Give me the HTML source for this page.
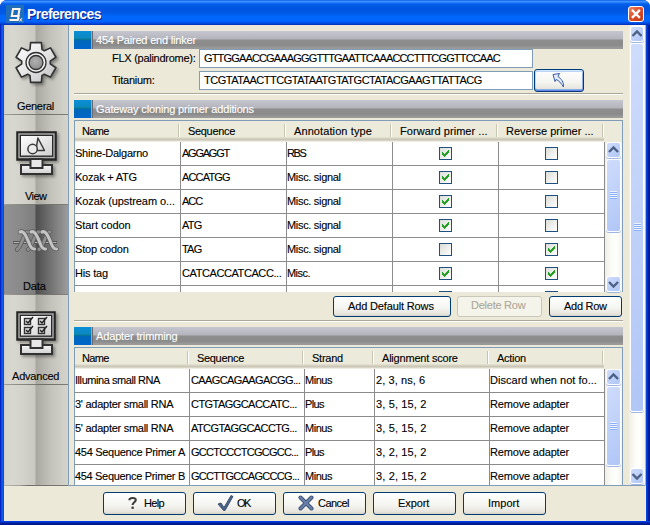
<!DOCTYPE html>
<html><head><meta charset="utf-8"><style>
*{box-sizing:border-box;margin:0;padding:0}
html,body{width:650px;height:525px;overflow:hidden;background:#fff}
body{position:relative;font-family:"Liberation Sans",sans-serif;font-size:11px;color:#000}
.a{position:absolute}
.t{position:absolute;white-space:nowrap;line-height:13px;font-size:11px;-webkit-text-stroke-width:0.12px}
.ttl{position:absolute;white-space:nowrap;line-height:16px;font-size:14px;font-weight:bold;color:#fff;text-shadow:1px 1px 0 #0a1e8a}
#frame{left:0;top:0;width:650px;height:525px;border-radius:7px 7px 0 0;overflow:hidden;
 background:linear-gradient(to right,#0019b0 0,#0831d9 1px,#1660f0 2px,#0a50e0 3px,#0a50e0 646px,#0038d8 647px,#0028b8 648px,#001890 649px)}
#title{left:0;top:0;width:650px;height:25px;border-radius:7px 7px 0 0;
 background:linear-gradient(to bottom,#0048dc 0,#3d95ff 1px,#3a90ff 2px,#1270f8 3px,#0560ec 4px,#0058e2 6px,#0054e0 10px,#005ce8 14px,#0066fc 16px,#0066ff 21px,#0050e8 23px,#003ccc 24px,#0030b8 25px)}
#bottomb{left:0;top:521px;width:650px;height:4px;background:linear-gradient(#0048f0,#0032d0 1px,#0022a8 2px,#001888 3px)}
#content{left:4px;top:25px;width:642px;height:496px;background:#ece9d8}
.cb{position:absolute;width:13px;height:13px;border:1px solid #1c5180;background:linear-gradient(135deg,#dcdcd7,#fff)}
.btn{position:absolute;border:1px solid #003c74;border-radius:3px;background:linear-gradient(#fff,#f4f4f0 60%,#e6e4dc 90%,#d6d0c5)}
.btn.dis{border-color:#c9c7ba;background:#f5f4ea}
.sbb{position:absolute;border:1px solid #fff;border-radius:3px;background:linear-gradient(135deg,#cedcfc,#bccff8 60%,#b0c6f6);box-shadow:0 1px 0 #9fb6e2}
.btn.foc{box-shadow:inset 0 1px 0 #cee7ff,inset 0 2px 0 #bcd4f6,inset 0 -1px 0 #6982ee,inset 0 -2px 0 #89ade4,inset 1px 0 0 #bcd4f6,inset -1px 0 0 #89ade4}

</style></head><body>
<div class="a" id="frame"></div>
<div class="a" id="title"></div>
<div class="a" id="bottomb"></div>
<div class="a" id="content"></div>
<svg class="a" style="left:6px;top:5px" width="18" height="18" viewBox="0 0 18 18">
<rect x="0" y="0" width="18" height="18" fill="#1864b4"/><rect x="0" y="0" width="18" height="18" fill="#2a80c8" opacity="0.35"/>
<path d="M7 4 H13.5 L12.3 11 H5.7 Z" stroke="#fff4ec" stroke-width="2" fill="none" stroke-linejoin="miter"/>
<path d="M12.8 10 L11.8 15 H3.5" stroke="#fff4ec" stroke-width="2" fill="none"/>
<path d="M13.5 13.5 L16 16.5 M16 13 L13.5 16.5" stroke="#fff4ec" stroke-width="1" fill="none"/></svg>
<div class="ttl" style="left:27px;top:6px;letter-spacing:-0.558px;">Preferences</div>
<svg class="a" style="left:628px;top:6px" width="16" height="16" viewBox="0 0 16 16">
<defs><linearGradient id="cg" x1="0" y1="0" x2="1" y2="1"><stop offset="0" stop-color="#f08a6a"/><stop offset="0.45" stop-color="#e0502a"/><stop offset="1" stop-color="#c03810"/></linearGradient></defs>
<rect x="0.5" y="0.5" width="15" height="15" rx="2.5" fill="url(#cg)" stroke="#fff" stroke-width="1"/>
<path d="M4.8 4.8 L11 11 M11 4.8 L4.8 11" stroke="#fff" stroke-width="2.4" stroke-linecap="square"/></svg>
<div class="a" style="left:4px;top:25px;width:64px;height:460px;background:linear-gradient(to right,#c4c4bc 0,#d4d4cc 1px,#d8d8d0 8px,#d2d2ca 20px,#c9c9c1 31px,#a8a8a0 32px,#c2c2ba 46px,#d4d4cc 63px);"></div>
<div class="a" style="left:4px;top:485px;width:64px;height:1px;background:linear-gradient(to right,#b8b8b0,#a0a098 16px,#707068 24px,#787870);"></div>
<div class="a" style="left:4px;top:114px;width:64px;height:1px;background:linear-gradient(to right,#a0a098,#8a8a82 16px,#6e6e68 40px,#808078);"></div>
<div class="t" style="left:17px;top:100px;letter-spacing:-0.308px;">General</div>
<div class="a" style="left:4px;top:204px;width:64px;height:1px;background:linear-gradient(to right,#a0a098,#8a8a82 16px,#6e6e68 40px,#808078);"></div>
<div class="t" style="left:25px;top:190px;letter-spacing:-0.560px;">View</div>
<div class="a" style="left:4px;top:205px;width:64px;height:89px;background:linear-gradient(to right,#888 0,#919191 1px,#8a8a8a 16px,#7e7e7e 31px,#4e4e4e 32px,#6e6e6e 45px,#9a9a9a 63px);"></div>
<div class="a" style="left:4px;top:294px;width:64px;height:1px;background:linear-gradient(to right,#a0a098,#8a8a82 16px,#6e6e68 40px,#808078);"></div>
<div class="t" style="left:23px;top:280px;letter-spacing:-0.112px;">Data</div>
<div class="a" style="left:4px;top:384px;width:64px;height:1px;background:linear-gradient(to right,#a0a098,#8a8a82 16px,#6e6e68 40px,#808078);"></div>
<div class="t" style="left:12px;top:370px;letter-spacing:-0.209px;">Advanced</div>
<svg class="a" style="left:4px;top:25px" width="64" height="360" viewBox="4 25 64 360">
<defs>
<linearGradient id="gg" x1="0" y1="0" x2="1" y2="1"><stop offset="0" stop-color="#fdfdfd"/><stop offset="0.5" stop-color="#e6e6e6"/><stop offset="1" stop-color="#bdbdbd"/></linearGradient>
<radialGradient id="gc" cx="0.45" cy="0.4" r="0.7"><stop offset="0" stop-color="#b0b0b0"/><stop offset="1" stop-color="#8a8a8a"/></radialGradient>
<linearGradient id="scr" x1="0" y1="0" x2="1" y2="1"><stop offset="0" stop-color="#ffffff"/><stop offset="1" stop-color="#d0d0d0"/></linearGradient>
<linearGradient id="bas" x1="0" y1="0" x2="0" y2="1"><stop offset="0" stop-color="#f8f8f8"/><stop offset="1" stop-color="#cfcfcf"/></linearGradient>
<filter id="sh" x="-20%" y="-20%" width="150%" height="150%"><feGaussianBlur in="SourceAlpha" stdDeviation="1.5"/><feOffset dx="2" dy="2"/><feComponentTransfer><feFuncA type="linear" slope="0.35"/></feComponentTransfer><feMerge><feMergeNode/><feMergeNode in="SourceGraphic"/></feMerge></filter>
<linearGradient id="dna" x1="0" y1="0" x2="0" y2="1"><stop offset="0" stop-color="#d8d8d8"/><stop offset="1" stop-color="#a8a8a8"/></linearGradient>
</defs>
<g filter="url(#sh)">
<path d="M30.00 49.52 L30.60 42.62 L41.40 42.62 L42.00 49.52 A14.3 14.3 0 0 1 44.24 50.81 L50.52 47.88 L55.92 57.24 L50.24 61.21 A14.3 14.3 0 0 1 50.24 63.79 L55.92 67.76 L50.52 77.12 L44.24 74.19 A14.3 14.3 0 0 1 42.00 75.48 L41.40 82.38 L30.60 82.38 L30.00 75.48 A14.3 14.3 0 0 1 27.76 74.19 L21.48 77.12 L16.08 67.76 L21.76 63.79 A14.3 14.3 0 0 1 21.76 61.21 L16.08 57.24 L21.48 47.88 L27.76 50.81 A14.3 14.3 0 0 1 30.00 49.52 Z" fill="url(#gg)" stroke="#303030" stroke-width="1.6" stroke-linejoin="round"/>
<circle cx="36" cy="62.5" r="10" fill="#f4f4f4" stroke="#303030" stroke-width="1.3"/>
<circle cx="36" cy="62.5" r="7" fill="url(#gc)" stroke="#303030" stroke-width="1.3"/>
</g>
<g filter="url(#sh)">
<rect x="17" y="132" width="39" height="28" fill="#3a3a3a" stroke="#222" stroke-width="1.5"/>
<rect x="19" y="134" width="35" height="23.5" fill="none" stroke="#b0b0b0" stroke-width="1.3"/>
<rect x="20.5" y="135.5" width="32" height="20.5" fill="url(#scr)" stroke="#2a2a2a" stroke-width="1"/>
<rect x="21" y="165" width="31" height="9" fill="url(#bas)" stroke="#333" stroke-width="2"/>
<rect x="30.5" y="159" width="12" height="9" fill="#e8e8e8" stroke="#333" stroke-width="2"/>
<path d="M37.9 138 L35.9 150.5 L44.5 150.5 Z" fill="#e4e4e4" stroke="#3a3a3a" stroke-width="1.5" stroke-linejoin="round"/>
<circle cx="32.6" cy="149" r="4.7" fill="#ebebeb" stroke="#3a3a3a" stroke-width="1.5"/>
</g>
<g>
<path d="M13 242.5 H57" stroke="#555" stroke-width="2.8"/><path d="M13.5 242.5 H56.5" stroke="#b4b4b4" stroke-width="1.1"/><path d="M17 249.5 C19 249 21 244 23 239 C25 234 26 231.5 28 232" fill="none" stroke="#5a5a5a" stroke-width="4.4" stroke-linecap="round"/><path d="M17 249.5 C19 249 21 244 23 239 C25 234 26 231.5 28 232" fill="none" stroke="#8e8e8e" stroke-width="2.9" stroke-linecap="round"/><path d="M28 249.5 C30 249 32 244 34 239 C36 234 37 231.5 39 232" fill="none" stroke="#5a5a5a" stroke-width="4.4" stroke-linecap="round"/><path d="M28 249.5 C30 249 32 244 34 239 C36 234 37 231.5 39 232" fill="none" stroke="#8e8e8e" stroke-width="2.9" stroke-linecap="round"/><path d="M39 249.5 C41 249 43 244 45 239 C47 234 48 231.5 50 232" fill="none" stroke="#5a5a5a" stroke-width="4.4" stroke-linecap="round"/><path d="M39 249.5 C41 249 43 244 45 239 C47 234 48 231.5 50 232" fill="none" stroke="#8e8e8e" stroke-width="2.9" stroke-linecap="round"/><path d="M20 232 C24 230 27 238 29 243 C30.5 247 32 249.5 34.5 249" fill="none" stroke="#585858" stroke-width="4.6" stroke-linecap="round"/><path d="M20 232 C24 230 27 238 29 243 C30.5 247 32 249.5 34.5 249" fill="none" stroke="#c4c4c4" stroke-width="3.1" stroke-linecap="round"/><path d="M31 232 C35 230 38 238 40 243 C41.5 247 43 249.5 45.5 249" fill="none" stroke="#585858" stroke-width="4.6" stroke-linecap="round"/><path d="M31 232 C35 230 38 238 40 243 C41.5 247 43 249.5 45.5 249" fill="none" stroke="#c4c4c4" stroke-width="3.1" stroke-linecap="round"/><path d="M42 232 C46 230 49 238 51 243 C52.5 247 54 249.5 56.5 249" fill="none" stroke="#585858" stroke-width="4.6" stroke-linecap="round"/><path d="M42 232 C46 230 49 238 51 243 C52.5 247 54 249.5 56.5 249" fill="none" stroke="#c4c4c4" stroke-width="3.1" stroke-linecap="round"/>
</g>
<g filter="url(#sh)">
<rect x="17" y="312" width="38" height="28" fill="#3a3a3a" stroke="#222" stroke-width="1.5"/>
<rect x="19" y="314" width="34" height="23.5" fill="none" stroke="#b0b0b0" stroke-width="1.3"/>
<rect x="20.5" y="315.5" width="31" height="20.5" fill="url(#scr)" stroke="#2a2a2a" stroke-width="1"/>
<rect x="21" y="345" width="31" height="9" fill="url(#bas)" stroke="#333" stroke-width="2"/>
<rect x="30.5" y="339" width="12" height="9" fill="#e8e8e8" stroke="#333" stroke-width="2"/>
<rect x="24.5" y="318.5" width="6" height="6" fill="#ddd" stroke="#333" stroke-width="1.4"/><path d="M26 321 L28 323 L33 317" fill="none" stroke="#222" stroke-width="1.5"/><rect x="38.5" y="318.5" width="6" height="6" fill="#ddd" stroke="#333" stroke-width="1.4"/><path d="M40 321 L42 323 L47 317" fill="none" stroke="#222" stroke-width="1.5"/><rect x="24.5" y="327.5" width="6" height="6" fill="#ddd" stroke="#333" stroke-width="1.4"/><path d="M26 330 L28 332 L33 326" fill="none" stroke="#222" stroke-width="1.5"/><rect x="38.5" y="327.5" width="6" height="6" fill="#ddd" stroke="#333" stroke-width="1.4"/><path d="M40 330 L42 332 L47 326" fill="none" stroke="#222" stroke-width="1.5"/>
</g>
</svg>
<div class="a" style="left:68px;top:25px;width:1px;height:461px;background:#7f9db9;"></div>
<div class="a" style="left:68px;top:485px;width:578px;height:1px;background:#7f9db9;"></div>
<div class="a" style="left:645px;top:25px;width:1px;height:461px;background:#a8b8cc;"></div>
<div class="a" style="left:74px;top:31px;width:17px;height:18px;background:linear-gradient(to bottom,#0b8fd8 0,#0a88c0 7px,#0b7f88 8px,#0068b8 9px,#0066c8 17px);"></div>
<div class="a" style="left:91px;top:31px;width:1px;height:18px;background:#60b8e8;"></div>
<div class="a" style="left:92px;top:31px;width:1px;height:18px;background:#6a6a70;"></div>
<div class="a" style="left:93px;top:31px;width:530px;height:18px;background:linear-gradient(to bottom,#c6c6d0 0,#b4b4bc 8px,#8e8e8e 9px,#8a8a8a 14px,#9a9a9a 17px);"></div>
<div class="t" style="left:96px;top:34px;letter-spacing:-0.192px;color:#ffffff;">454 Paired end linker</div>
<div class="t" style="left:112px;top:52px;letter-spacing:-0.268px;">FLX (palindrome):</div>
<div class="t" style="left:112px;top:74px;letter-spacing:-0.260px;">Titanium:</div>
<div class="a" style="left:199px;top:49px;width:334px;height:19px;background:#fff;border:1px solid #7f9db9;"></div>
<div class="a" style="left:199px;top:71px;width:334px;height:19px;background:#fff;border:1px solid #7f9db9;"></div>
<div class="t" style="left:204px;top:52px;letter-spacing:-0.839px;">GTTGGAACCGAAAGGGTTTGAATTCAAACCCTTTCGGTTCCAAC</div>
<div class="t" style="left:204px;top:74px;letter-spacing:-0.484px;">TCGTATAACTTCGTATAATGTATGCTATACGAAGTTATTACG</div>
<div class="btn foc" style="left:534px;top:69px;width:50px;height:23px"></div>
<svg class="a" style="left:548px;top:70px" width="20" height="20"><path d="M5 4.5 L11.5 3.5 L10 6.5 C13 8.5 16 12 15.5 17 C13 13 11 10.5 8 9.5 L7 11.5 Z" fill="#e4ecfa" stroke="#3a5ca8" stroke-width="1" stroke-linejoin="round"/></svg>
<div class="a" style="left:74px;top:93px;width:549px;height:1px;background:#aca899;"></div>
<div class="a" style="left:74px;top:94px;width:549px;height:1px;background:#fff;"></div>
<div class="a" style="left:74px;top:100px;width:17px;height:18px;background:linear-gradient(to bottom,#0b8fd8 0,#0a88c0 7px,#0b7f88 8px,#0068b8 9px,#0066c8 17px);"></div>
<div class="a" style="left:91px;top:100px;width:1px;height:18px;background:#60b8e8;"></div>
<div class="a" style="left:92px;top:100px;width:1px;height:18px;background:#6a6a70;"></div>
<div class="a" style="left:93px;top:100px;width:530px;height:18px;background:linear-gradient(to bottom,#c6c6d0 0,#b4b4bc 8px,#8e8e8e 9px,#8a8a8a 14px,#9a9a9a 17px);"></div>
<div class="t" style="left:96px;top:103px;letter-spacing:-0.147px;color:#ffffff;">Gateway cloning primer additions</div>
<div class="a" style="left:0;top:0;width:650px;height:292px;overflow:hidden">
<div class="a" style="left:74px;top:120px;width:549px;height:173px;background:#fff;border:1px solid #7f9db9;border-bottom-width:1px;"></div>
<div class="a" style="left:75px;top:121px;width:547px;height:21px;background:#ebeadb;"></div>
<div class="a" style="left:75px;top:137px;width:529px;height:1px;background:#e2decd;"></div>
<div class="a" style="left:75px;top:138px;width:529px;height:1px;background:#d6d2c2;"></div>
<div class="a" style="left:75px;top:139px;width:529px;height:1px;background:#cbc7b8;"></div>
<div class="a" style="left:75px;top:140px;width:529px;height:1px;background:#d8d4c6;"></div>
<div class="a" style="left:75px;top:141px;width:529px;height:1px;background:#f0eee4;"></div>
<div class="a" style="left:178px;top:124px;width:1px;height:13px;background:#c7c5b2;"></div>
<div class="a" style="left:179px;top:124px;width:1px;height:13px;background:#fff;"></div>
<div class="a" style="left:284px;top:124px;width:1px;height:13px;background:#c7c5b2;"></div>
<div class="a" style="left:285px;top:124px;width:1px;height:13px;background:#fff;"></div>
<div class="a" style="left:390px;top:124px;width:1px;height:13px;background:#c7c5b2;"></div>
<div class="a" style="left:391px;top:124px;width:1px;height:13px;background:#fff;"></div>
<div class="a" style="left:496px;top:124px;width:1px;height:13px;background:#c7c5b2;"></div>
<div class="a" style="left:497px;top:124px;width:1px;height:13px;background:#fff;"></div>
<div class="a" style="left:602px;top:124px;width:1px;height:13px;background:#c7c5b2;"></div>
<div class="a" style="left:603px;top:124px;width:1px;height:13px;background:#fff;"></div>
<div class="t" style="left:82px;top:125px;letter-spacing:-0.686px;">Name</div>
<div class="t" style="left:188px;top:125px;letter-spacing:-0.324px;">Sequence</div>
<div class="t" style="left:294px;top:125px;letter-spacing:0.098px;">Annotation type</div>
<div class="t" style="left:400px;top:125px;letter-spacing:0.049px;">Forward primer ...</div>
<div class="t" style="left:506px;top:125px;letter-spacing:0.015px;">Reverse primer ...</div>
<div class="t" style="left:75px;top:147px;letter-spacing:-0.248px;">Shine-Dalgarno</div>
<div class="t" style="left:182px;top:147px;letter-spacing:-1.237px;">AGGAGGT</div>
<div class="t" style="left:287px;top:147px;letter-spacing:-1.342px;">RBS</div>
<div class="cb" style="left:439px;top:147px"></div>
<svg class="a" style="left:439px;top:147px" width="13" height="13" shape-rendering="crispEdges"><path fill="#21a121" d="M9 3h1v1h-1zM8 4h2v1h-2zM3 5h1v1h-1zM7 5h3v1h-3zM3 6h2v1h-2zM6 6h3v1h-3zM3 7h5v1h-5zM4 8h3v1h-3zM5 9h1v1h-1z"/></svg>
<div class="cb" style="left:545px;top:147px"></div>
<div class="t" style="left:75px;top:171px;letter-spacing:-0.213px;">Kozak + ATG</div>
<div class="t" style="left:182px;top:171px;letter-spacing:-0.842px;">ACCATGG</div>
<div class="t" style="left:287px;top:171px;letter-spacing:-0.314px;">Misc. signal</div>
<div class="cb" style="left:439px;top:171px"></div>
<svg class="a" style="left:439px;top:171px" width="13" height="13" shape-rendering="crispEdges"><path fill="#21a121" d="M9 3h1v1h-1zM8 4h2v1h-2zM3 5h1v1h-1zM7 5h3v1h-3zM3 6h2v1h-2zM6 6h3v1h-3zM3 7h5v1h-5zM4 8h3v1h-3zM5 9h1v1h-1z"/></svg>
<div class="cb" style="left:545px;top:171px"></div>
<div class="t" style="left:75px;top:195px;letter-spacing:-0.078px;">Kozak (upstream o...</div>
<div class="t" style="left:182px;top:195px;letter-spacing:-1.073px;">ACC</div>
<div class="t" style="left:287px;top:195px;letter-spacing:-0.314px;">Misc. signal</div>
<div class="cb" style="left:439px;top:195px"></div>
<svg class="a" style="left:439px;top:195px" width="13" height="13" shape-rendering="crispEdges"><path fill="#21a121" d="M9 3h1v1h-1zM8 4h2v1h-2zM3 5h1v1h-1zM7 5h3v1h-3zM3 6h2v1h-2zM6 6h3v1h-3zM3 7h5v1h-5zM4 8h3v1h-3zM5 9h1v1h-1z"/></svg>
<div class="cb" style="left:545px;top:195px"></div>
<div class="t" style="left:75px;top:219px;letter-spacing:-0.056px;">Start codon</div>
<div class="t" style="left:182px;top:219px;letter-spacing:-0.804px;">ATG</div>
<div class="t" style="left:287px;top:219px;letter-spacing:-0.314px;">Misc. signal</div>
<div class="cb" style="left:439px;top:219px"></div>
<svg class="a" style="left:439px;top:219px" width="13" height="13" shape-rendering="crispEdges"><path fill="#21a121" d="M9 3h1v1h-1zM8 4h2v1h-2zM3 5h1v1h-1zM7 5h3v1h-3zM3 6h2v1h-2zM6 6h3v1h-3zM3 7h5v1h-5zM4 8h3v1h-3zM5 9h1v1h-1z"/></svg>
<div class="cb" style="left:545px;top:219px"></div>
<div class="t" style="left:75px;top:243px;letter-spacing:-0.202px;">Stop codon</div>
<div class="t" style="left:182px;top:243px;letter-spacing:-0.804px;">TAG</div>
<div class="t" style="left:287px;top:243px;letter-spacing:-0.314px;">Misc. signal</div>
<div class="cb" style="left:439px;top:243px"></div>
<div class="cb" style="left:545px;top:243px"></div>
<svg class="a" style="left:545px;top:243px" width="13" height="13" shape-rendering="crispEdges"><path fill="#21a121" d="M9 3h1v1h-1zM8 4h2v1h-2zM3 5h1v1h-1zM7 5h3v1h-3zM3 6h2v1h-2zM6 6h3v1h-3zM3 7h5v1h-5zM4 8h3v1h-3zM5 9h1v1h-1z"/></svg>
<div class="t" style="left:75px;top:267px;letter-spacing:-0.179px;">His tag</div>
<div class="t" style="left:182px;top:267px;letter-spacing:-0.409px;">CATCACCATCACC...</div>
<div class="t" style="left:287px;top:267px;letter-spacing:-0.551px;">Misc.</div>
<div class="cb" style="left:439px;top:267px"></div>
<svg class="a" style="left:439px;top:267px" width="13" height="13" shape-rendering="crispEdges"><path fill="#21a121" d="M9 3h1v1h-1zM8 4h2v1h-2zM3 5h1v1h-1zM7 5h3v1h-3zM3 6h2v1h-2zM6 6h3v1h-3zM3 7h5v1h-5zM4 8h3v1h-3zM5 9h1v1h-1z"/></svg>
<div class="cb" style="left:545px;top:267px"></div>
<svg class="a" style="left:545px;top:267px" width="13" height="13" shape-rendering="crispEdges"><path fill="#21a121" d="M9 3h1v1h-1zM8 4h2v1h-2zM3 5h1v1h-1zM7 5h3v1h-3zM3 6h2v1h-2zM6 6h3v1h-3zM3 7h5v1h-5zM4 8h3v1h-3zM5 9h1v1h-1z"/></svg>
<div class="cb" style="left:439px;top:291px"></div>
<svg class="a" style="left:439px;top:291px" width="13" height="13" shape-rendering="crispEdges"><path fill="#21a121" d="M9 3h1v1h-1zM8 4h2v1h-2zM3 5h1v1h-1zM7 5h3v1h-3zM3 6h2v1h-2zM6 6h3v1h-3zM3 7h5v1h-5zM4 8h3v1h-3zM5 9h1v1h-1z"/></svg>
<div class="cb" style="left:545px;top:291px"></div>
<svg class="a" style="left:545px;top:291px" width="13" height="13" shape-rendering="crispEdges"><path fill="#21a121" d="M9 3h1v1h-1zM8 4h2v1h-2zM3 5h1v1h-1zM7 5h3v1h-3zM3 6h2v1h-2zM6 6h3v1h-3zM3 7h5v1h-5zM4 8h3v1h-3zM5 9h1v1h-1z"/></svg>
<div class="a" style="left:75px;top:165px;width:529px;height:1px;background:#8c8c8c;"></div>
<div class="a" style="left:75px;top:189px;width:529px;height:1px;background:#8c8c8c;"></div>
<div class="a" style="left:75px;top:213px;width:529px;height:1px;background:#8c8c8c;"></div>
<div class="a" style="left:75px;top:237px;width:529px;height:1px;background:#8c8c8c;"></div>
<div class="a" style="left:75px;top:261px;width:529px;height:1px;background:#8c8c8c;"></div>
<div class="a" style="left:75px;top:285px;width:529px;height:1px;background:#8c8c8c;"></div>
<div class="a" style="left:180px;top:142px;width:1px;height:150px;background:#8c8c8c;"></div>
<div class="a" style="left:286px;top:142px;width:1px;height:150px;background:#8c8c8c;"></div>
<div class="a" style="left:392px;top:142px;width:1px;height:150px;background:#8c8c8c;"></div>
<div class="a" style="left:498px;top:142px;width:1px;height:150px;background:#8c8c8c;"></div>
<div class="a" style="left:604px;top:142px;width:1px;height:150px;background:#8c8c8c;"></div>
</div>
<div class="a" style="left:605px;top:142px;width:17px;height:150px;background:linear-gradient(to right,#f0efe6,#fcfcf8 40%,#fefefb 70%,#f4f3ec);"></div>
<div class="sbb" style="left:606px;top:142px;width:15px;height:16px"></div>
<svg class="a" style="left:606px;top:142px" width="15" height="16"><path d="M3.0 10.0 L7.5 5.5 L12.0 10.0" stroke="#4d6185" stroke-width="2.4" fill="none"/></svg>
<div class="sbb" style="left:606px;top:159px;width:15px;height:73px"></div>
<div class="a" style="left:610px;top:191px;width:7px;height:1px;background:#eef4fe;box-shadow:0 1px 0 #8cb0f8"></div>
<div class="a" style="left:610px;top:193px;width:7px;height:1px;background:#eef4fe;box-shadow:0 1px 0 #8cb0f8"></div>
<div class="a" style="left:610px;top:195px;width:7px;height:1px;background:#eef4fe;box-shadow:0 1px 0 #8cb0f8"></div>
<div class="a" style="left:610px;top:197px;width:7px;height:1px;background:#eef4fe;box-shadow:0 1px 0 #8cb0f8"></div>
<div class="sbb" style="left:606px;top:276px;width:15px;height:16px"></div>
<svg class="a" style="left:606px;top:276px" width="15" height="16"><path d="M3.0 6.0 L7.5 10.5 L12.0 6.0" stroke="#4d6185" stroke-width="2.4" fill="none"/></svg>
<div class="a" style="left:74px;top:320px;width:549px;height:1px;background:#aca899;"></div>
<div class="a" style="left:74px;top:321px;width:549px;height:1px;background:#fff;"></div>
<div class="btn" style="left:333px;top:296px;width:118px;height:21px"></div>
<div class="t" style="left:348px;top:300px;letter-spacing:-0.143px;">Add Default Rows</div>
<div class="btn dis" style="left:457px;top:296px;width:85px;height:21px"></div>
<div class="t" style="left:471px;top:299px;letter-spacing:-0.248px;color:#aca899;">Delete Row</div>
<div class="btn" style="left:549px;top:296px;width:73px;height:21px"></div>
<div class="t" style="left:564px;top:300px;letter-spacing:-0.279px;">Add Row</div>
<div class="a" style="left:74px;top:327px;width:17px;height:18px;background:linear-gradient(to bottom,#0b8fd8 0,#0a88c0 7px,#0b7f88 8px,#0068b8 9px,#0066c8 17px);"></div>
<div class="a" style="left:91px;top:327px;width:1px;height:18px;background:#60b8e8;"></div>
<div class="a" style="left:92px;top:327px;width:1px;height:18px;background:#6a6a70;"></div>
<div class="a" style="left:93px;top:327px;width:530px;height:18px;background:linear-gradient(to bottom,#c6c6d0 0,#b4b4bc 8px,#8e8e8e 9px,#8a8a8a 14px,#9a9a9a 17px);"></div>
<div class="t" style="left:96px;top:330px;letter-spacing:-0.143px;color:#ffffff;">Adapter trimming</div>
<div class="a" style="left:0;top:0;width:650px;height:485px;overflow:hidden">
<div class="a" style="left:74px;top:347px;width:549px;height:200px;background:#fff;border:1px solid #7f9db9;border-bottom-width:0;"></div>
<div class="a" style="left:75px;top:348px;width:547px;height:21px;background:#ebeadb;"></div>
<div class="a" style="left:75px;top:364px;width:529px;height:1px;background:#e2decd;"></div>
<div class="a" style="left:75px;top:365px;width:529px;height:1px;background:#d6d2c2;"></div>
<div class="a" style="left:75px;top:366px;width:529px;height:1px;background:#cbc7b8;"></div>
<div class="a" style="left:75px;top:367px;width:529px;height:1px;background:#d8d4c6;"></div>
<div class="a" style="left:75px;top:368px;width:529px;height:1px;background:#f0eee4;"></div>
<div class="a" style="left:187px;top:351px;width:1px;height:13px;background:#c7c5b2;"></div>
<div class="a" style="left:188px;top:351px;width:1px;height:13px;background:#fff;"></div>
<div class="a" style="left:302px;top:351px;width:1px;height:13px;background:#c7c5b2;"></div>
<div class="a" style="left:303px;top:351px;width:1px;height:13px;background:#fff;"></div>
<div class="a" style="left:372px;top:351px;width:1px;height:13px;background:#c7c5b2;"></div>
<div class="a" style="left:373px;top:351px;width:1px;height:13px;background:#fff;"></div>
<div class="a" style="left:487px;top:351px;width:1px;height:13px;background:#c7c5b2;"></div>
<div class="a" style="left:488px;top:351px;width:1px;height:13px;background:#fff;"></div>
<div class="a" style="left:602px;top:351px;width:1px;height:13px;background:#c7c5b2;"></div>
<div class="a" style="left:603px;top:351px;width:1px;height:13px;background:#fff;"></div>
<div class="t" style="left:82px;top:352px;letter-spacing:-0.686px;">Name</div>
<div class="t" style="left:197px;top:352px;letter-spacing:-0.324px;">Sequence</div>
<div class="t" style="left:312px;top:352px;letter-spacing:-0.240px;">Strand</div>
<div class="t" style="left:382px;top:352px;letter-spacing:-0.207px;">Alignment score</div>
<div class="t" style="left:497px;top:352px;letter-spacing:-0.266px;">Action</div>
<div class="t" style="left:75px;top:374px;letter-spacing:-0.439px;">Illumina small RNA</div>
<div class="t" style="left:191px;top:374px;letter-spacing:-0.622px;">CAAGCAGAAGACGG...</div>
<div class="t" style="left:305px;top:374px;letter-spacing:-0.469px;">Minus</div>
<div class="t" style="left:376px;top:374px;letter-spacing:0.093px;">2, 3, ns, 6</div>
<div class="t" style="left:490px;top:374px;letter-spacing:0.024px;">Discard when not fo...</div>
<div class="t" style="left:75px;top:398px;letter-spacing:-0.266px;">3' adapter small RNA</div>
<div class="t" style="left:191px;top:398px;letter-spacing:-0.549px;">CTGTAGGCACCATC...</div>
<div class="t" style="left:305px;top:398px;letter-spacing:-0.602px;">Plus</div>
<div class="t" style="left:376px;top:398px;letter-spacing:0.136px;">3, 5, 15, 2</div>
<div class="t" style="left:490px;top:398px;letter-spacing:-0.170px;">Remove adapter</div>
<div class="t" style="left:75px;top:422px;letter-spacing:-0.266px;">5' adapter small RNA</div>
<div class="t" style="left:191px;top:422px;letter-spacing:-0.585px;">ATCGTAGGCACCTG...</div>
<div class="t" style="left:305px;top:422px;letter-spacing:-0.469px;">Minus</div>
<div class="t" style="left:376px;top:422px;letter-spacing:0.136px;">3, 5, 15, 2</div>
<div class="t" style="left:490px;top:422px;letter-spacing:-0.170px;">Remove adapter</div>
<div class="t" style="left:75px;top:446px;letter-spacing:-0.298px;">454 Sequence Primer A</div>
<div class="t" style="left:191px;top:446px;letter-spacing:-0.750px;">GCCTCCCTCGCGCC...</div>
<div class="t" style="left:305px;top:446px;letter-spacing:-0.602px;">Plus</div>
<div class="t" style="left:376px;top:446px;letter-spacing:0.136px;">3, 2, 15, 2</div>
<div class="t" style="left:490px;top:446px;letter-spacing:-0.170px;">Remove adapter</div>
<div class="t" style="left:75px;top:470px;letter-spacing:-0.327px;">454 Sequence Primer B</div>
<div class="t" style="left:191px;top:470px;letter-spacing:-0.693px;">GCCTTGCCAGCCCG...</div>
<div class="t" style="left:305px;top:470px;letter-spacing:-0.469px;">Minus</div>
<div class="t" style="left:376px;top:470px;letter-spacing:0.136px;">3, 2, 15, 2</div>
<div class="t" style="left:490px;top:470px;letter-spacing:-0.170px;">Remove adapter</div>
<div class="a" style="left:75px;top:392px;width:529px;height:1px;background:#8c8c8c;"></div>
<div class="a" style="left:75px;top:416px;width:529px;height:1px;background:#8c8c8c;"></div>
<div class="a" style="left:75px;top:440px;width:529px;height:1px;background:#8c8c8c;"></div>
<div class="a" style="left:75px;top:464px;width:529px;height:1px;background:#8c8c8c;"></div>
<div class="a" style="left:189px;top:369px;width:1px;height:116px;background:#8c8c8c;"></div>
<div class="a" style="left:304px;top:369px;width:1px;height:116px;background:#8c8c8c;"></div>
<div class="a" style="left:374px;top:369px;width:1px;height:116px;background:#8c8c8c;"></div>
<div class="a" style="left:489px;top:369px;width:1px;height:116px;background:#8c8c8c;"></div>
<div class="a" style="left:604px;top:369px;width:1px;height:116px;background:#8c8c8c;"></div>
</div>
<div class="a" style="left:0;top:0;width:650px;height:485px;overflow:hidden">
<div class="a" style="left:605px;top:369px;width:17px;height:130px;background:linear-gradient(to right,#f0efe6,#fcfcf8 40%,#fefefb 70%,#f4f3ec);"></div>
<div class="sbb" style="left:606px;top:369px;width:15px;height:16px"></div>
<svg class="a" style="left:606px;top:369px" width="15" height="16"><path d="M3.0 10.0 L7.5 5.5 L12.0 10.0" stroke="#4d6185" stroke-width="2.4" fill="none"/></svg>
<div class="sbb" style="left:606px;top:386px;width:15px;height:80px"></div>
<div class="a" style="left:610px;top:422px;width:7px;height:1px;background:#eef4fe;box-shadow:0 1px 0 #8cb0f8"></div>
<div class="a" style="left:610px;top:424px;width:7px;height:1px;background:#eef4fe;box-shadow:0 1px 0 #8cb0f8"></div>
<div class="a" style="left:610px;top:426px;width:7px;height:1px;background:#eef4fe;box-shadow:0 1px 0 #8cb0f8"></div>
<div class="a" style="left:610px;top:428px;width:7px;height:1px;background:#eef4fe;box-shadow:0 1px 0 #8cb0f8"></div>
</div>
<div class="a" style="left:629px;top:25px;width:16px;height:460px;background:linear-gradient(to right,#f0efe6,#fcfcf8 40%,#fefefb 70%,#f4f3ec);"></div>
<div class="sbb" style="left:630px;top:26px;width:14px;height:16px"></div>
<svg class="a" style="left:630px;top:26px" width="14" height="16"><path d="M2.5 10.0 L7.0 5.5 L11.5 10.0" stroke="#4d6185" stroke-width="2.4" fill="none"/></svg>
<div class="sbb" style="left:630px;top:43px;width:14px;height:369px"></div>
<div class="a" style="left:634px;top:223px;width:7px;height:1px;background:#eef4fe;box-shadow:0 1px 0 #8cb0f8"></div>
<div class="a" style="left:634px;top:225px;width:7px;height:1px;background:#eef4fe;box-shadow:0 1px 0 #8cb0f8"></div>
<div class="a" style="left:634px;top:227px;width:7px;height:1px;background:#eef4fe;box-shadow:0 1px 0 #8cb0f8"></div>
<div class="a" style="left:634px;top:229px;width:7px;height:1px;background:#eef4fe;box-shadow:0 1px 0 #8cb0f8"></div>
<div class="sbb" style="left:630px;top:468px;width:14px;height:16px"></div>
<svg class="a" style="left:630px;top:468px" width="14" height="16"><path d="M2.5 6.0 L7.0 10.5 L11.5 6.0" stroke="#4d6185" stroke-width="2.4" fill="none"/></svg>
<div class="btn" style="left:103px;top:492px;width:83px;height:23px"></div>
<div class="t" style="left:144px;top:497px;letter-spacing:-0.656px;">Help</div>
<div class="btn" style="left:193px;top:492px;width:83px;height:23px"></div>
<div class="t" style="left:237px;top:497px;letter-spacing:-1.453px;">OK</div>
<div class="btn" style="left:283px;top:492px;width:83px;height:23px"></div>
<div class="t" style="left:318px;top:497px;letter-spacing:-0.542px;">Cancel</div>
<div class="btn" style="left:373px;top:492px;width:83px;height:23px"></div>
<div class="t" style="left:398px;top:497px;letter-spacing:-0.085px;">Export</div>
<div class="btn" style="left:463px;top:492px;width:83px;height:23px"></div>
<div class="t" style="left:488px;top:497px;letter-spacing:0.019px;">Import</div>
<svg class="a" style="left:127px;top:496px" width="11" height="14"><path d="M2.3 4.2 C2.3 1.5 8.8 1 8.8 4 C8.8 6.2 5.6 6.3 5.6 9" fill="none" stroke="#3c3c3c" stroke-width="2.1"/><rect x="4.5" y="10.6" width="2.3" height="2.3" fill="#3c3c3c"/></svg>
<svg class="a" style="left:216px;top:494px" width="18" height="18"><path d="M2 10 L5 9 L8 13.5 L15 1.5 L17 2.5 L9 16.5 L7.5 16.5 Z" fill="#4a6590" stroke="#2c3e5c" stroke-width="0.8" stroke-linejoin="round"/></svg>
<svg class="a" style="left:297px;top:494px" width="18" height="18"><path d="M3.5 3.5 L14.5 14.5 M14.5 3.5 L3.5 14.5" stroke="#3d5278" stroke-width="4" stroke-linecap="round"/><path d="M3.5 3.5 L14.5 14.5 M14.5 3.5 L3.5 14.5" stroke="#6a80a8" stroke-width="2.2" stroke-linecap="round"/></svg>
</body></html>
